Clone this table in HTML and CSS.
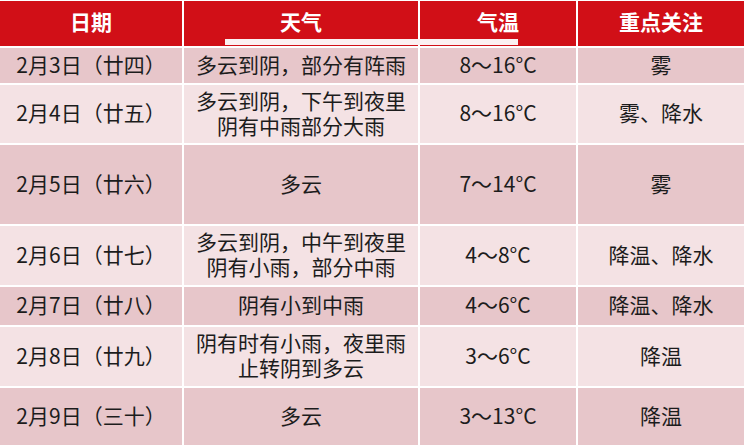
FILE: index.html
```html
<!DOCTYPE html>
<html lang="zh">
<head>
<meta charset="utf-8">
<link rel="stylesheet" href="styles.css">
</head>
<body>
<div class="table">
  <div class="row head">
    <div class="cell">日期</div>
    <div class="cell">天气</div>
    <div class="cell">气温</div>
    <div class="cell">重点关注</div>
  </div>
  <div class="row dark r1">
    <div class="cell">2月3日（廿四）</div>
    <div class="cell">多云到阴，部分有阵雨</div>
    <div class="cell">8～16°C</div>
    <div class="cell">雾</div>
  </div>
  <div class="row light r2">
    <div class="cell">2月4日（廿五）</div>
    <div class="cell multi"><span class="line">多云到阴，下午到夜里</span><span class="line">阴有中雨部分大雨</span></div>
    <div class="cell">8～16°C</div>
    <div class="cell">雾、降水</div>
  </div>
  <div class="row dark r3">
    <div class="cell">2月5日（廿六）</div>
    <div class="cell">多云</div>
    <div class="cell">7～14°C</div>
    <div class="cell">雾</div>
  </div>
  <div class="row light r4">
    <div class="cell">2月6日（廿七）</div>
    <div class="cell multi"><span class="line">多云到阴，中午到夜里</span><span class="line">阴有小雨，部分中雨</span></div>
    <div class="cell">4～8°C</div>
    <div class="cell">降温、降水</div>
  </div>
  <div class="row dark r5">
    <div class="cell">2月7日（廿八）</div>
    <div class="cell">阴有小到中雨</div>
    <div class="cell">4～6°C</div>
    <div class="cell">降温、降水</div>
  </div>
  <div class="row light r6">
    <div class="cell">2月8日（廿九）</div>
    <div class="cell multi"><span class="line">阴有时有小雨，夜里雨</span><span class="line">止转阴到多云</span></div>
    <div class="cell">3～6°C</div>
    <div class="cell">降温</div>
  </div>
  <div class="row dark r7">
    <div class="cell">2月9日（三十）</div>
    <div class="cell">多云</div>
    <div class="cell">3～13°C</div>
    <div class="cell">降温</div>
  </div>
</div>
</body>
</html>
```

FILE: styles.css
```css
html, body {
  margin: 0;
  padding: 0;
  background: #ffffff;
}
body {
  width: 744px;
  height: 447px;
  overflow: hidden;
  font-family: "Noto Sans CJK SC", "Noto Sans", sans-serif;
}
.table {
  display: flex;
  flex-direction: column;
  gap: 2px;
  width: 742px;
}
.row {
  display: grid;
  grid-template-columns: 182px 234px 156px 166px;
  column-gap: 2px;
}
.cell {
  display: flex;
  align-items: center;
  justify-content: center;
  text-align: center;
  font-size: 21px;
  line-height: 25px;
  color: #1c1c1c;
  padding-bottom: 3px;
  box-sizing: border-box;
}
.multi {
  flex-direction: column;
}
.line {
  display: block;
  height: 25px;
  line-height: 25px;
  overflow: visible;
}
.head {
  position: relative;
  height: 45px;
  margin-top: 1px;
}
.head .cell {
  background: #d10f17;
  color: #ffffff;
  font-weight: bold;
  padding-bottom: 5px;
}
.head::after {
  content: "";
  position: absolute;
  left: 225px;
  width: 293px;
  top: 38px;
  height: 6px;
  background: #fbf1f2;
}
.dark .cell { background: #e7c6ca; }
.light .cell { background: #f4e2e4; }
.r1 { height: 35px; }
.r2 { height: 58px; }
.r3 { height: 79px; }
.r4 { height: 59px; }
.r5 { height: 38px; }
.r6 { height: 59px; }
.r7 { height: 57px; }
```
